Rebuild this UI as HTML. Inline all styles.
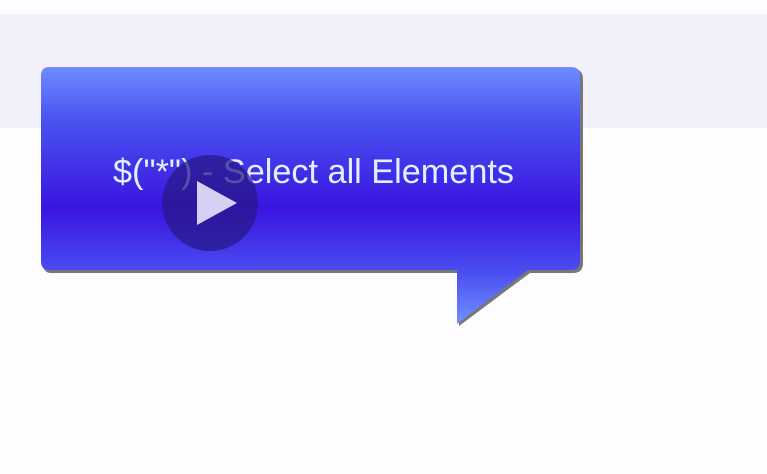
<!DOCTYPE html>
<html><head><style>
html,body{margin:0;padding:0;width:767px;height:474px;overflow:hidden;background:#fdfdff;font-family:"Liberation Sans",sans-serif}
.band{position:absolute;left:0;top:14px;width:767px;height:114px;background:#f2f0fb}
svg{position:absolute;left:0;top:0}
</style></head><body>
<div class="band"></div>
<svg width="767" height="474">
<defs>
<linearGradient id="g" x1="0" y1="67" x2="0" y2="324" gradientUnits="userSpaceOnUse">
<stop offset="0" stop-color="#6d8cff"/>
<stop offset="0.2" stop-color="#4a55f0"/>
<stop offset="0.55" stop-color="#3a14e0"/>
<stop offset="0.8" stop-color="#4a4ef0"/>
<stop offset="1" stop-color="#7090ff"/>
</linearGradient>
</defs>
<path d="M51,69 H573 Q583,69 583,79 V263 Q583,273 573,273 H530 L459,326 V273 H51 Q43,273 43,263 V79 Q43,69 51,69Z" fill="#777"/>
<path d="M49,67 H571 Q580,67 580,76 V261 Q580,270 571,270 H528 L457,324 V270 H49 Q41,270 41,261 V76 Q41,67 49,67Z" fill="url(#g)"/>
<text x="113" y="183" font-family="Liberation Sans, sans-serif" font-size="34" textLength="401" lengthAdjust="spacingAndGlyphs" fill="#e0f0ff">$("*") - Select all Elements</text>
<circle cx="210" cy="203" r="48" fill="#28188a" fill-opacity="0.75"/>
<path d="M197,181 L237,203 L197,225Z" fill="#d8d0f4"/>
</svg>
</body></html>
